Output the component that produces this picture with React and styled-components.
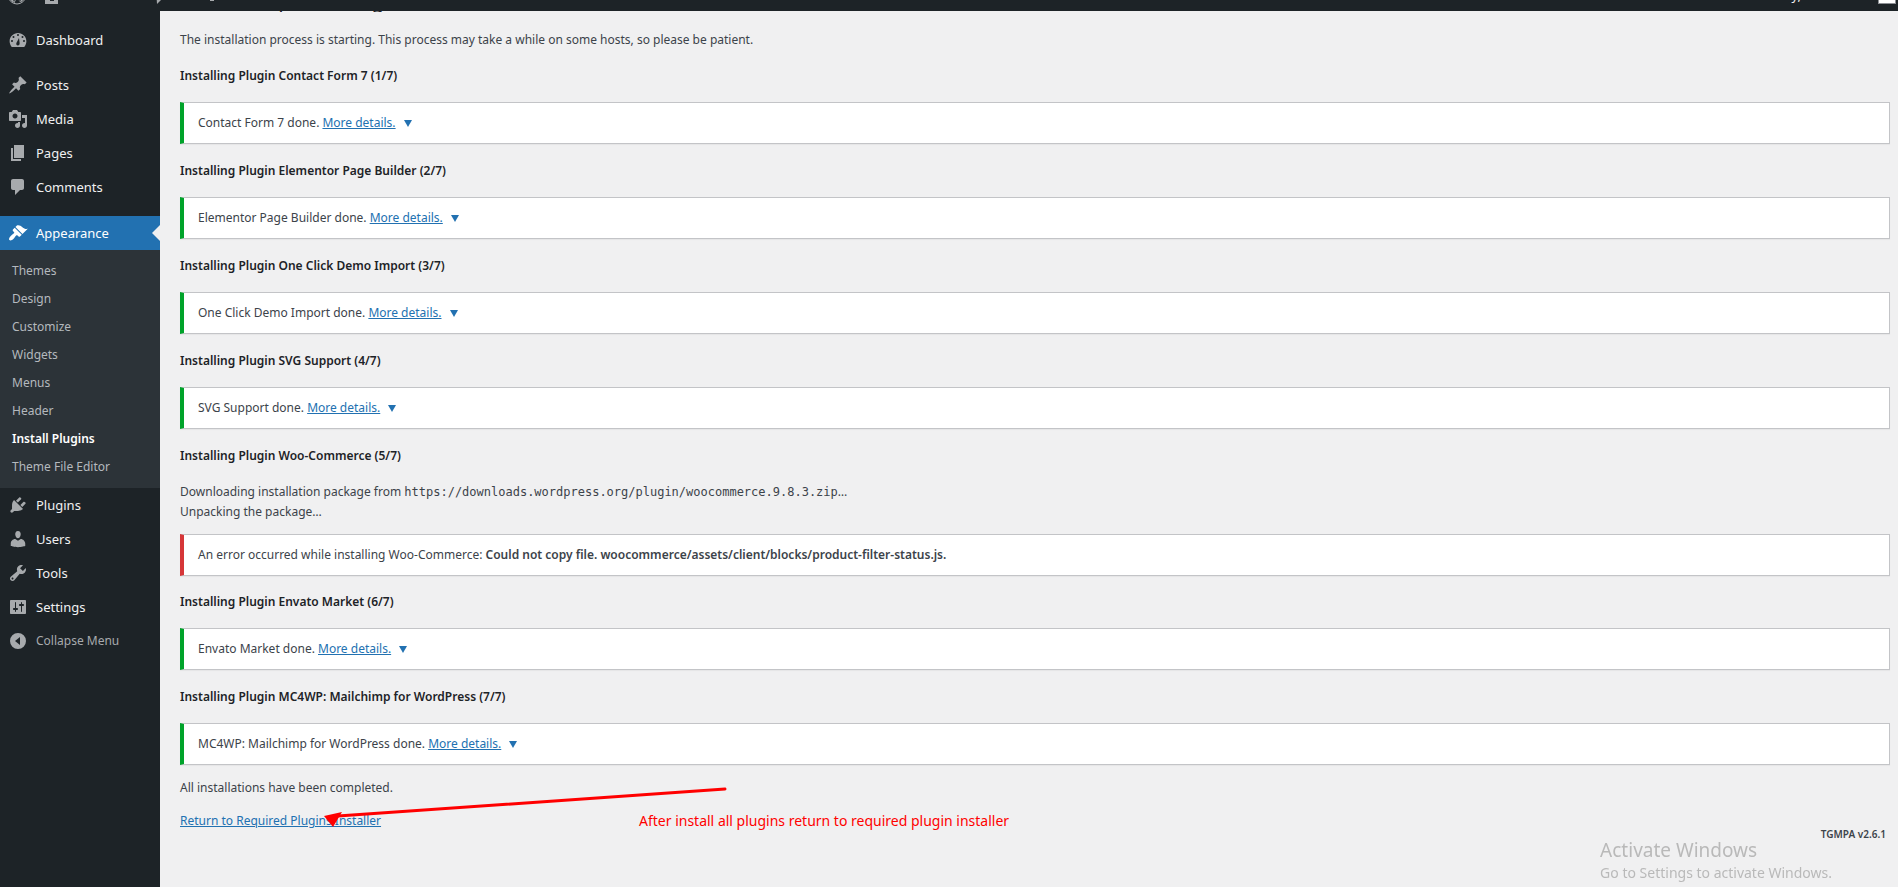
import React from "react";
import styled, { createGlobalStyle } from "styled-components";

const GlobalStyle = createGlobalStyle`
  * {
    box-sizing: border-box;
  }

  body {
    margin: 0;
    background: #f0f0f1;
    color: #3c434a;
    font-family: "Noto Sans", "Open Sans", sans-serif;
    font-size: 12px;
    line-height: 20px;
  }
`;

// Admin bar, only its lower edge is left in view
const AdminBar = styled.header`
  display: flex;
  align-items: flex-end;
  height: 11px;
  overflow: hidden;
  background: #1d2327;
  color: #f0f0f1;
`;

const BarItems = styled.div`
  display: flex;
  flex: 1;
  align-items: center;
  height: 32px;
  padding: 0 2px 0 7px;
  font-size: 13px;
  line-height: 32px;
`;

const BarIcon = styled.svg`
  width: 20px;
  height: 20px;
  margin-right: ${(p) => p.$gap || 0}px;
  fill: #a7aaad;
`;

const Greeting = styled.span`
  margin-left: auto;
  margin-right: 77px;
`;

const Avatar = styled.span`
  width: 18px;
  height: 18px;
  border: 1px solid #8c8f94;
  background: radial-gradient(circle at 50% 100%, #fff 50%, #c3c4c7 55%);
`;

const Layout = styled.div`
  display: flex;
  min-height: calc(100vh - 11px);
`;

const Sidebar = styled.nav`
  flex: 0 0 160px;
  padding-top: 12px;
  background: #1d2327;
`;

const Menu = styled.ul`
  margin: 0;
  padding: 0;
  list-style: none;
`;

const MenuGap = styled.li`
  height: ${(p) => p.$size || 11}px;
`;

const MenuLink = styled.a`
  position: relative;
  display: flex;
  align-items: center;
  height: 34px;
  color: ${(p) => (p.$active ? "#fff" : "#f0f0f1")};
  background: ${(p) => (p.$active ? "#2271b1" : "transparent")};
  font-size: 13px;
  text-decoration: none;

  svg {
    width: 20px;
    height: 20px;
    margin: 0 8px;
    fill: ${(p) => (p.$active ? "#fff" : "#a7aaad")};
  }

  &::after {
    content: "";
    display: ${(p) => (p.$active ? "block" : "none")};
    position: absolute;
    top: 9px;
    right: 0;
    border: 8px solid transparent;
    border-left: 0;
    border-right-color: #f0f0f1;
  }
`;

const Submenu = styled.ul`
  margin: 0;
  padding: 7px 0;
  background: #2c3338;
  list-style: none;
`;

const SubLink = styled.a`
  display: block;
  padding: 0 12px;
  color: ${(p) => (p.$current ? "#fff" : "#b4b9be")};
  font-weight: ${(p) => (p.$current ? 600 : 400)};
  line-height: 28px;
  text-decoration: none;
`;

const CollapseButton = styled.button`
  display: flex;
  align-items: center;
  width: 100%;
  height: 34px;
  padding: 0;
  border: 0;
  background: transparent;
  color: #a7aaad;
  font: inherit;

  svg {
    width: 20px;
    height: 20px;
    margin: 0 8px;
    fill: #a7aaad;
  }
`;

const Content = styled.main`
  flex: 1;
  min-width: 0;
  padding: 0 8px 0 20px;
`;

const TitleClip = styled.div`
  display: flex;
  align-items: flex-end;
  height: 1px;
  margin-bottom: 18px;
  overflow: hidden;
`;

const Title = styled.h1`
  margin: 0;
  color: #1d2327;
  font-size: 21px;
  font-weight: 400;
  line-height: 24px;
`;

const Text = styled.p`
  margin: 0 0 ${(p) => p.$gap || 0}px;
`;

const Code = styled.code`
  font-family: "DejaVu Sans Mono", monospace;
  font-size: 12px;
  line-height: 12px;
`;

const PluginTitle = styled.h4`
  margin: 16px 0;
  color: #1d2327;
  font-size: 12px;
  font-weight: 600;
  line-height: 20px;
`;

const Notice = styled.div`
  margin-bottom: ${(p) => p.$gap || 17}px;
  padding: 10px 14px;
  border: 1px solid #c3c4c7;
  border-left: 4px solid ${(p) => (p.$error ? "#d63638" : "#00a32a")};
  background: #fff;
  box-shadow: 0 1px 1px rgba(0, 0, 0, 0.04);

  strong {
    font-weight: 600;
  }
`;

const Link = styled.a`
  color: #2271b1;
  text-decoration: underline;
`;

const Toggle = styled.span`
  display: inline-block;
  margin-left: 8px;
  border: 4px solid transparent;
  border-top: 7px solid #2271b1;
  border-bottom: 0;
`;

const Footer = styled.footer`
  position: relative;
  display: flex;
  align-items: flex-start;
  justify-content: space-between;
`;

// Red annotation drawn over the page
const Arrow = styled.svg`
  position: absolute;
  top: -24px;
  left: 140px;
  width: 410px;
  height: 50px;
`;

const Note = styled.span`
  position: absolute;
  top: 0;
  left: 459px;
  color: #f00;
  font-size: 14px;
`;

const Version = styled.span`
  padding: 15px 4px 0 0;
  font-size: 10px;
  font-weight: 600;
  line-height: 16px;
`;

const Watermark = styled.aside`
  position: fixed;
  right: 66px;
  bottom: 3px;
  color: #b9b9b9;
  font-size: 14px;
  line-height: 22px;
`;

const WatermarkTitle = styled.div`
  font-size: 19px;
  line-height: 24px;
`;

const icons = {
  dashboard: "M3.76 17h12.48c1.34-1.51 2.15-3.5 2.15-5.67C18.39 6.62 14.62 3 10 3S1.61 6.62 1.61 11.33c0 2.17.81 4.16 2.15 5.67zM10 4a1 1 0 1 1 0 2 1 1 0 0 1 0-2zM5.5 6a1 1 0 1 1 0 2 1 1 0 0 1 0-2zm9 0a1 1 0 1 1 0 2 1 1 0 0 1 0-2zM11 8l.6 4.8c.3 1.5-.5 2.7-1.7 2.7s-2-1.2-1.5-2.4L11 8zM4 10a1 1 0 1 1 0 2 1 1 0 0 1 0-2zm12 0a1 1 0 1 1 0 2 1 1 0 0 1 0-2z",
  posts: "M10.44 3.02l1.82-1.82 6.36 6.35-1.83 1.82c-1.05-.68-2.48-.57-3.41.36l-.75.75c-.92.93-1.04 2.35-.35 3.41l-1.83 1.82-2.41-2.41-2.8 2.79c-.42.42-3.38 2.71-3.8 2.29s1.86-3.39 2.28-3.81l2.79-2.79L4.1 9.36l1.83-1.82c1.05.69 2.48.57 3.4-.36l.75-.75c.93-.92 1.05-2.35.36-3.41z",
  media: "M13 11V4c0-.55-.45-1-1-1h-1.67L9 1H5L3.67 3H2c-.55 0-1 .45-1 1v7c0 .55.45 1 1 1h10c.55 0 1-.45 1-1zM7 4.5c1.38 0 2.5 1.12 2.5 2.5S8.38 9.5 7 9.5 4.5 8.38 4.5 7 5.62 4.5 7 4.5zM14 6h5v10.5c0 1.38-1.12 2.5-2.5 2.5S14 17.88 14 16.5s1.12-2.5 2.5-2.5c.17 0 .34.02.5.05V9h-3V6zm-4 8.05V13h2v3.5c0 1.38-1.12 2.5-2.5 2.5S7 17.88 7 16.5 8.12 14 9.5 14c.17 0 .34.02.5.05z",
  pages: "M6 15V2h10v13H6zm-1 1h8v2H3V5h2v11z",
  comments: "M5 2h9c1.1 0 2 .9 2 2v7c0 1.1-.9 2-2 2h-2l-5 5v-5H5c-1.1 0-2-.9-2-2V4c0-1.1.9-2 2-2z",
  appearance: "M14.48 11.06L7.41 3.99l1.5-1.5c.5-.56 2.3-.47 3.51.32 1.21.8 1.43 1.28 2.91 2.1 1.18.64 2.45 1.26 4.45.85zm-.71.71L6.7 4.7 4.93 6.47c-.39.39-.39 1.02 0 1.41l1.06 1.06c.39.39.39 1.03 0 1.42-.6.6-1.43 1.11-2.21 1.69-.35.26-.7.53-1.01.84C1.43 14.23.4 16.08 1.4 17.07c.99 1 2.84-.03 4.18-1.36.31-.31.58-.66.85-1.02.57-.78 1.08-1.61 1.69-2.21.39-.39 1.02-.39 1.41 0l1.06 1.06c.39.39 1.02.39 1.41 0z",
  plugins: "M13.11 4.36L9.87 7.6 8 5.73l3.24-3.24c.35-.34 1.05-.2 1.56.32.52.51.66 1.21.31 1.55zm-8 1.77l.91-1.12 9.01 9.01-1.19.84c-.71.71-2.63 1.16-3.82 1.16H6.14L4.9 17.26c-.59.59-1.54.59-2.12 0-.59-.58-.59-1.53 0-2.12l1.24-1.24v-3.88c0-1.13.4-3.19 1.09-3.89zm7.26 3.97l3.24-3.24c.34-.35 1.04-.21 1.55.31.52.51.66 1.21.31 1.55l-3.24 3.25z",
  users: "M10 9.25c-2.27 0-2.73-3.44-2.73-3.44C7 4.02 7.82 2 9.97 2c2.16 0 2.98 2.02 2.71 3.81 0 0-.41 3.44-2.68 3.44zm0 2.57L12.72 10c2.39 0 4.52 2.33 4.52 4.53v2.49s-3.65 1.13-7.24 1.13c-3.65 0-7.24-1.13-7.24-1.13v-2.49c0-2.25 1.94-4.48 4.47-4.48z",
  tools: "M16.68 9.77c-1.34 1.34-3.3 1.67-4.95.99l-5.41 6.52c-.99.99-2.59.99-3.58 0s-.99-2.59 0-3.57l6.52-5.42c-.68-1.65-.35-3.61.99-4.95 1.28-1.28 3.12-1.62 4.72-1.06l-2.89 2.89 2.82 2.82 2.86-2.87c.53 1.58.18 3.39-1.08 4.65zM3.81 16.21c.4.39 1.04.39 1.43 0 .4-.4.4-1.04 0-1.43-.39-.4-1.03-.4-1.43 0-.39.39-.39 1.03 0 1.43z",
  settings: "M18 16V4c0-.55-.45-1-1-1H3c-.55 0-1 .45-1 1v12c0 .55.45 1 1 1h14c.55 0 1-.45 1-1zM8 11h1c.55 0 1 .45 1 1s-.45 1-1 1H8v1.5c0 .28-.22.5-.5.5s-.5-.22-.5-.5V13H6c-.55 0-1-.45-1-1s.45-1 1-1h1V5.5c0-.28.22-.5.5-.5s.5.22.5.5V11zm5-2h-1c-.55 0-1-.45-1-1s.45-1 1-1h1V5.5c0-.28.22-.5.5-.5s.5.22.5.5V7h1c.55 0 1 .45 1 1s-.45 1-1 1h-1v5.5c0 .28-.22.5-.5.5s-.5-.22-.5-.5V9z",
  collapse: "M10 2a8 8 0 1 1 0 16 8 8 0 0 1 0-16zm2 4l-5 4 5 4V6z",
};

const Icon = ({ name }) => (
  <svg viewBox="0 0 20 20" aria-hidden="true">
    <path fillRule="evenodd" d={icons[name]} />
  </svg>
);

const submenu = [
  "Themes",
  "Design",
  "Customize",
  "Widgets",
  "Menus",
  "Header",
  "Install Plugins",
  "Theme File Editor",
];

const MenuItem = ({ icon, children, active }) => (
  <li>
    <MenuLink href="#" $active={active}>
      <Icon name={icon} />
      {children}
    </MenuLink>
  </li>
);

const PluginDone = ({ name, step, gap }) => (
  <>
    <PluginTitle>
      Installing Plugin {name} ({step}/7)
    </PluginTitle>
    <Notice $gap={gap}>
      {name} done. <Link href="#">More details.</Link>
      <Toggle />
    </Notice>
  </>
);

export default function App() {
  return (
    <>
      <GlobalStyle />
      <AdminBar>
        <BarItems>
          <BarIcon viewBox="0 0 20 20" $gap={15} aria-hidden="true">
            <circle cx="10" cy="10" r="9" fill="none" stroke="#a7aaad" strokeWidth="1" />
            <path d="M3 7l4 10 3-7 3 7 4-10a8 8 0 0 1-4 10.5L10 12l-2.500 6A8 8 0 0 1 3 7z" />
          </BarIcon>
          <BarIcon viewBox="0 0 20 20" $gap={91} aria-hidden="true">
            <path d="M10 2L1 10h2v9h13v-9h3zM8 13h4v3H8z" fillRule="evenodd" />
          </BarIcon>
          <BarIcon viewBox="0 0 20 20" $gap={29} aria-hidden="true">
            <path d="M3 3h13v11H9l-5 5z" />
          </BarIcon>
          <BarIcon viewBox="0 0 20 20" aria-hidden="true">
            <path d="M8 4h4v4h4v4h-4v4H8v-4H4V8h4z" />
          </BarIcon>
          <Greeting>Howdy,</Greeting>
          <Avatar />
        </BarItems>
      </AdminBar>
      <Layout>
        <Sidebar>
          <Menu>
            <MenuItem icon="dashboard">Dashboard</MenuItem>
            <MenuGap />
            <MenuItem icon="posts">Posts</MenuItem>
            <MenuItem icon="media">Media</MenuItem>
            <MenuItem icon="pages">Pages</MenuItem>
            <MenuItem icon="comments">Comments</MenuItem>
            <MenuGap $size={12} />
            <MenuItem icon="appearance" active>
              Appearance
            </MenuItem>
            <li>
              <Submenu>
                {submenu.map((item) => (
                  <li key={item}>
                    <SubLink href="#" $current={item === "Install Plugins"}>
                      {item}
                    </SubLink>
                  </li>
                ))}
              </Submenu>
            </li>
            <MenuItem icon="plugins">Plugins</MenuItem>
            <MenuItem icon="users">Users</MenuItem>
            <MenuItem icon="tools">Tools</MenuItem>
            <MenuItem icon="settings">Settings</MenuItem>
            <li>
              <CollapseButton type="button">
                <Icon name="collapse" />
                Collapse Menu
              </CollapseButton>
            </li>
          </Menu>
        </Sidebar>
        <Content>
          <TitleClip>
            <Title>Install Required Plugins</Title>
          </TitleClip>
          <Text>
            The installation process is starting. This process may take a while
            on some hosts, so please be patient.
          </Text>
          <PluginDone name="Contact Form 7" step={1} />
          <PluginDone name="Elementor Page Builder" step={2} />
          <PluginDone name="One Click Demo Import" step={3} />
          <PluginDone name="SVG Support" step={4} />
          <PluginTitle>Installing Plugin Woo-Commerce (5/7)</PluginTitle>
          <Text>
            Downloading installation package from{" "}
            <Code>
              https://downloads.wordpress.org/plugin/woocommerce.9.8.3.zip
            </Code>
            …
          </Text>
          <Text $gap={12}>Unpacking the package…</Text>
          <Notice $error $gap={16}>
            An error occurred while installing Woo-Commerce:{" "}
            <strong>
              Could not copy file.
              woocommerce/assets/client/blocks/product-filter-status.js.
            </strong>
          </Notice>
          <PluginDone name="Envato Market" step={6} />
          <PluginDone name="MC4WP: Mailchimp for WordPress" step={7} gap={13} />
          <Text $gap={13}>All installations have been completed.</Text>
          <Footer>
            <Link href="#">Return to Required Plugins Installer</Link>
            <Arrow viewBox="0 0 410 50" aria-hidden="true">
              <path d="M405 2L18 29" stroke="#f00" strokeWidth="3" strokeLinecap="round" />
              <path d="M4 29L22 25L13 40z" fill="#f00" />
            </Arrow>
            <Note>After install all plugins return to required plugin installer</Note>
            <Version>TGMPA v2.6.1</Version>
          </Footer>
        </Content>
      </Layout>
      <Watermark>
        <WatermarkTitle>Activate Windows</WatermarkTitle>
        Go to Settings to activate Windows.
      </Watermark>
    </>
  );
}
